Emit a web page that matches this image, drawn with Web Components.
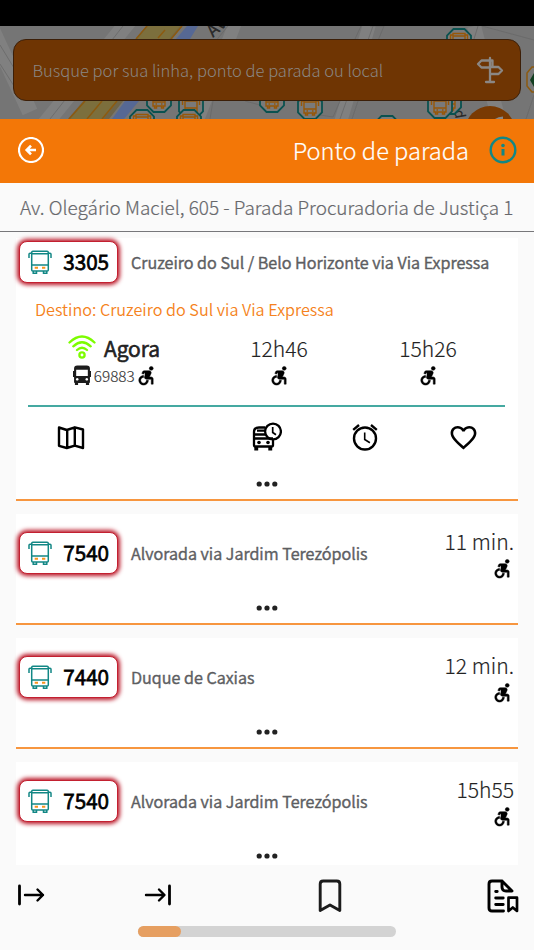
<!DOCTYPE html>
<html lang="pt-BR">
<head>
<meta charset="utf-8">
<title>Ponto de parada</title>
<style>
  html, body {
    margin: 0;
    height: 100%;
    overflow: hidden;
    background: #fafafa;
  }
  body {
    font-family: "Noto Sans CJK SC", "Noto Sans", sans-serif;
    font-weight: 300;
    color: #222;
  }
</style>
</head>
<body>
<stop-app></stop-app>
<script>
const icons = {
  sign: ['0 0 28 28', '<g fill="none" stroke="currentColor" stroke-width="2.300" stroke-linejoin="round" stroke-linecap="round"><path d="M14 2v24M10 26h8M14 4.500H5.500L2 8l3.500 3.500H14M14 11h8.500l3.500 3.500-3.500 3.500H14M14 4.500h2.500v6"/></g>'],
  back: ['0 0 26 26', '<circle cx="13" cy="13" r="12" fill="none" stroke="currentColor" stroke-width="2.200"/><path d="M18 13H9M13 8.700 8.700 13l4.300 4.300" fill="none" stroke="currentColor" stroke-width="2.600"/>'],
  info: ['0 0 28 28', '<circle cx="14" cy="14" r="12.300" fill="none" stroke="currentColor" stroke-width="2.400"/><circle cx="14" cy="9.500" r="1.800" fill="currentColor"/><path d="M14 13v6.500" stroke="currentColor" stroke-width="3"/>'],
  vehicle: ['0 0 24 24', '<g fill="none" stroke="#128785" stroke-width="1.500"><path d="M1 8V4.200q0-1 1-1h2M23 8V4.200q0-1-1-1h-2"/><path d="M3.700 20V2.500q0-1.200 1.200-1.200h14.200q1.200 0 1.200 1.200V20q0 1-1 1H4.700q-1 0-1-1zM3.700 3.800h16.600M3.700 15h16.600M5.200 21v2.300h3.300V21M15.500 21v2.300h3.300V21"/></g><path d="M6.700 17.700H10M14 17.700h3.300" stroke="#f7941d" stroke-width="1.900"/>'],
  wifi: ['0 0 28 24', '<g fill="none" stroke="currentColor" stroke-width="2.300" stroke-linecap="round"><path d="M1.500 7.500q12.500-12 25 0M5.300 11.300q8.700-8 17.400 0M9 15q5-4.500 10 0"/><circle cx="14" cy="20" r="2.600"/></g>'],
  bus: ['0 0 17 20', '<path fill="#1c1c1c" fill-rule="evenodd" d="M4 .5h9q3 0 3 3V6h1v6h-1v5.200q0 .8-.8.800V20h-3v-2H4.800v2h-3v-2q-.8 0-.8-.8V12H0V6h1V3.500q0-3 3-3zM3 4.800V11h11V4.800zM4 13a1.300 1.300 0 1 0 .01 0zM13 13a1.300 1.300 0 1 0 .01 0z"/>'],
  chair: ['0 0 24 24', '<g fill="currentColor" stroke="currentColor" stroke-width=".5"><circle cx="18" cy="4.540" r="2"/><path d="M15 17h-2c0 1.650-1.350 3-3 3s-3-1.350-3-3 1.350-3 3-3v-2c-2.760 0-5 2.240-5 5s2.240 5 5 5 5-2.240 5-5zm3-3.500h-1.860l1.670-3.670C18.420 8.500 17.440 7 15.960 7h-5.200c-.81 0-1.540.47-1.870 1.200L8.220 10l1.920.53.650-1.530H13l-1.830 4.100c-.6 1.330.39 2.900 1.850 2.900H18v5h2v-5.500c0-1.100-.9-2-2-2z"/><path d="M11.500 8h5l-3 6.500-2 .3z"/></g>'],
  map: ['0 0 28 26', '<path d="M2 3.500 9.800 6l8-2.700L26 5.500V24l-8.200-2.300L9.800 24 2 21.800zM10.200 6v17.500M17.800 3.500v18" fill="none" stroke="currentColor" stroke-width="2.400" stroke-linejoin="round"/>'],
  schedule: ['0 0 30 30', '<g fill="none" stroke="currentColor" stroke-width="2.300"><path d="M13.300 5.500H7q-5 0-5 4.500v13.500q0 1 1 1h17q1 0 1-1V18M2 16.500h19M5 8.700h8.500M3 12.500h10.500"/><circle cx="21" cy="9.500" r="7.900"/><path d="M20.700 5v5.500l3.300 2.300" stroke-width="1.700"/></g><g fill="currentColor"><path d="M2.300 24h3.900v4.500H2.300zM16.300 24h3.900v4.500h-3.900z"/><circle cx="7" cy="20.500" r="1.800"/><circle cx="16" cy="20.500" r="1.800"/></g>'],
  alarm: ['0 0 26 28', '<g fill="none" stroke="currentColor" stroke-width="2.400"><circle cx="13" cy="15.500" r="11"/><path d="M1.200 6.800 7 2M24.800 6.800 19 2"/><path d="M12.700 9.500v7l5.200 3.200" stroke-width="1.600"/></g>'],
  heart: ['0 0 24 24', '<path fill="currentColor" d="M16.500 3c-1.740 0-3.410.81-4.500 2.090C10.910 3.810 9.240 3 7.500 3 4.420 3 2 5.420 2 8.500c0 3.780 3.400 6.860 8.550 11.540L12 21.350l1.450-1.320C18.600 15.360 22 12.280 22 8.500 22 5.420 19.580 3 16.500 3zm-4.400 15.550-.1.100-.1-.1C7.140 14.240 4 11.390 4 8.500 4 6.500 5.500 5 7.500 5c1.540 0 3.040.99 3.570 2.360h1.870C13.460 5.990 14.960 5 16.500 5c2 0 3.500 1.500 3.500 3.500 0 2.890-3.140 5.740-7.900 10.050z"/>'],
  dots: ['0 0 22 6', '<g fill="currentColor"><circle cx="3.200" cy="3" r="2.600"/><circle cx="11" cy="3" r="2.600"/><circle cx="18.800" cy="3" r="2.600"/></g>'],
  start: ['0 0 28 22', '<g fill="none" stroke="currentColor" stroke-linecap="round" stroke-linejoin="round"><path d="M2.500 2v18" stroke-width="2.800"/><path d="M8 11h18M20.500 5.500 26 11l-5.500 5.500" stroke-width="2.400"/></g>'],
  end: ['0 0 28 22', '<g fill="none" stroke="currentColor" stroke-linecap="round" stroke-linejoin="round"><path d="M25.500 2v18" stroke-width="2.800"/><path d="M2 11h18M15 5.500l5.500 5.500-5.500 5.500" stroke-width="2.400"/></g>'],
  bookmark: ['0 0 24 34', '<path d="M2.200 31.500V5q0-3 3-3h13.600q3 0 3 3v26.500L12 26z" fill="none" stroke="#1c1c1c" stroke-width="2.900" stroke-linejoin="round"/>'],
  document: ['0 0 32 34', '<g fill="none" stroke="currentColor" stroke-width="2.900" stroke-linecap="round" stroke-linejoin="round"><path d="M16.500 32H5q-3 0-3-3V5q0-3 3-3h10l10 10h-6q-4 0-4-4V2"/><path d="M8.700 12.500h1.500M8.700 19h7.500M8.700 25.500h7.500"/><path d="M21.500 18.700h8.500V32l-4.200-3.500-4.300 3.500z" stroke-width="2.700"/></g>'],
};

class AppIcon extends HTMLElement {
  constructor() {
    super();
    this.attachShadow({ mode: 'open' });
  }
  connectedCallback() {
    const [box, body] = icons[this.getAttribute('name')];
    const w = this.getAttribute('w');
    const h = this.getAttribute('h') || w;
    this.shadowRoot.innerHTML = `
      <style>
        :host{
          display: block;
          flex: none;
          width: ${w}px;
          height: ${h}px;
        }
        svg{
          display: block;
        }
      </style>
      <svg width="${w}" height="${h}" viewBox="${box}" preserveAspectRatio="none">${body}</svg>
    `;
  }
}
customElements.define('app-icon', AppIcon);

class MapBackdrop extends HTMLElement {
  constructor() {
    super();
    this.attachShadow({ mode: 'open' });
  }
  getStop(x, y) {
    return `
      <g transform="translate(${x} ${y})" fill="none">
        <path d="M-5.500-12h11L12-5.500v11L5.500 12h-11L-12 5.500v-11z" fill="#7a7a7a" stroke="#0a5250" stroke-width="1.800"/>
        <path d="M-6 6V-7.500H6V6zM-6-5H6M-6 2H6M-8.500-1v-5h2M8.500-1v-5h-2M-4.500 6v2h2V6M2.500 6v2h2V6M-3.500 4h1.500M2 4h1.500" stroke="#975708" stroke-width="1.400"/>
      </g>
    `;
  }
  connectedCallback() {
    const stops = [[159, 100], [191, 106], [142, 122], [189, 122], [459, 41], [272, 100], [449, 102], [440, 106], [310, 107], [387, 128]];
    this.shadowRoot.innerHTML = `
      <style>
        :host{
          display: block;
          grid-area: 1 / 1;
          height: 93px;
          overflow: hidden;
        }
        svg{
          display: block;
        }
      </style>
      <svg width="534" height="93" viewBox="0 26 534 93">
        <path fill="#757575" d="M0 26h534v93H0z"/>
        <g fill="none" stroke="#808080">
          <path d="M-8 30 30 112M133 16 45 124" stroke-width="16"/>
          <path d="M372 16 340 124M238 16 196 124" stroke-width="13"/>
          <path d="M474 26 500 124" stroke-width="14"/>
        </g>
        <g fill="none" stroke="#686868" stroke-width=".8">
          <path d="M0 64 14 86M0 45 14 68M123 26 50 119M228 26 200 60M361 26 355 39M370 26 375 26 384 26 370 60M373 26 340 119M478 26 474 39M482 26 534 40M213 101 210 119M245 101 260 105M320 115 333 117 340 101M358 101 352 119M534 95 526 119"/>
        </g>
        <path fill="#706548" d="M147 26h35L109 119H68z"/>
        <path fill="#7c6f3d" d="M148 26h32L103 119H70z"/>
        <path fill="none" stroke="#8c5a10" stroke-width="1.500" d="M147 26 136 39M85 101 69 119M182 26 171 39M165 30 158 38M102 101 87 119M117 101 102 119"/>
        <path fill="#566894" d="M187 26h11l-8 13h-14zM125 101h14l-15 18h-12z"/>
        <text x="213" y="38" transform="rotate(-42 213 38)" font-size="17" font-weight="500" fill="#2b2b2b">Av</text>
        <text x="451" y="94" transform="rotate(80 451 94)" font-size="14" font-weight="500" fill="#2b2b2b">and</text>
        ${stops.map(([x, y]) => this.getStop(x, y)).join('')}
        <circle cx="490" cy="131" r="25" fill="#793a03"/>
        <path d="M495 121q3-3 8-3" stroke="#888" stroke-width="3" fill="none"/>
        <path d="M535 67h-3l-5 6v13l5 6h3z" fill="#7a7a7a" stroke="#8c5a10" stroke-width="1.500"/>
        <path d="M534 73v14l-4-7z" fill="#123f20"/>
      </svg>
    `;
  }
}
customElements.define('map-backdrop', MapBackdrop);

class SearchBar extends HTMLElement {
  constructor() {
    super();
    this.attachShadow({ mode: 'open' });
  }
  connectedCallback() {
    this.shadowRoot.innerHTML = `
      <style>
        :host{
          display: flex;
          align-items: center;
          justify-content: space-between;
          grid-area: 1 / 1;
          box-sizing: border-box;
          height: 62px;
          margin: 13px 13px 0;
          padding: 0 16px 0 18.5px;
          background: #6f3503;
          border: 1px solid #3c1f08;
          border-radius: 13px;
          color: #8b8784;
          font-size: 16.55px;
          line-height: 26px;
        }
      </style>
      <span><slot></slot></span>
      <app-icon name="sign" w="28"></app-icon>
    `;
  }
}
customElements.define('search-bar', SearchBar);

class PanelHeader extends HTMLElement {
  constructor() {
    super();
    this.attachShadow({ mode: 'open' });
  }
  connectedCallback() {
    this.shadowRoot.innerHTML = `
      <style>
        :host{
          display: block;
        }
        header{
          display: flex;
          align-items: center;
          box-sizing: border-box;
          height: 64px;
          padding: 0 17px 3px 18px;
          background: #f37707;
          color: #fff;
        }
        h1{
          flex: 1;
          margin: 0 20px 0 0;
          text-align: right;
          font-size: 23.65px;
          font-weight: 300;
          line-height: 36px;
          -webkit-text-stroke: .2px;
        }
        .info{
          color: #128785;
        }
        p{
          box-sizing: border-box;
          height: 49px;
          margin: 0;
          padding: 0 20px;
          border-bottom: 1px solid #77777a;
          color: #67686c;
          font-size: 18.950px;
          line-height: 48px;
          white-space: nowrap;
          -webkit-text-stroke: .2px;
        }
      </style>
      <header>
        <app-icon name="back" w="26"></app-icon>
        <h1><slot name="title"></slot></h1>
        <app-icon class="info" name="info" w="28"></app-icon>
      </header>
      <p><slot></slot></p>
    `;
  }
}
customElements.define('panel-header', PanelHeader);

class LineBadge extends HTMLElement {
  constructor() {
    super();
    this.attachShadow({ mode: 'open' });
  }
  connectedCallback() {
    this.shadowRoot.innerHTML = `
      <style>
        :host{
          display: flex;
          flex: none;
          align-items: center;
          justify-content: space-between;
          box-sizing: border-box;
          width: 99px;
          height: 42px;
          padding: 0 8px 2px;
          background: #fff;
          border: 1px solid #c32030;
          border-radius: 8px;
          box-shadow: 0 0 4px 2px #b91526;
          color: #000;
          font-size: 20.800px;
          font-weight: 350;
          line-height: 30px;
          -webkit-text-stroke: .8px;
        }
        app-icon{
          margin-top: 2px;
        }
      </style>
      <app-icon name="vehicle" w="24"></app-icon>
      <slot></slot>
    `;
  }
}
customElements.define('line-badge', LineBadge);

class DepartureTime extends HTMLElement {
  constructor() {
    super();
    this.attachShadow({ mode: 'open' });
  }
  connectedCallback() {
    const live = this.hasAttribute('live');
    const vehicle = this.getAttribute('vehicle');
    this.shadowRoot.innerHTML = `
      <style>
        :host{
          display: flex;
          flex-direction: column;
          align-items: center;
          color: #222;
          white-space: nowrap;
          -webkit-text-stroke: .15px;
        }
        :host([live]){
          margin-right: 4px;
        }
        div{
          display: flex;
          align-items: center;
          height: 28px;
          padding-bottom: 2px;
          font-size: 21.100px;
          line-height: 28px;
        }
        .live{
          gap: 8px;
          font-weight: 350;
          -webkit-text-stroke: .7px;
        }
        .live app-icon{
          margin-top: -2px;
          color: #7cfc00;
        }
        .access{
          height: 22px;
          margin-right: 1px;
          font-size: 15.300px;
          line-height: 22px;
          color: #333;
        }
        :host([live]) .access{
          margin-right: -1.500px;
        }
        .access span{
          margin: 0 -1px 0 3px;
        }
        .access app-icon{
          color: #000;
        }
      </style>
      <div class="${live ? 'live' : ''}">
        ${live ? '<app-icon name="wifi" w="28" h="24"></app-icon>' : ''}
        <span><slot></slot></span>
      </div>
      <div class="access">
        ${vehicle ? `<app-icon name="bus" w="18" h="20"></app-icon><span>${vehicle}</span>` : ''}
        <app-icon name="chair" w="23"></app-icon>
      </div>
    `;
  }
}
customElements.define('departure-time', DepartureTime);

class LineCard extends HTMLElement {
  constructor() {
    super();
    this.attachShadow({ mode: 'open' });
  }
  getDetails() {
    return `
      <p class="destination"><slot name="destination"></slot></p>
      <div class="times"><slot name="times"></slot></div>
      <hr>
      <nav>
        <app-icon name="map" w="28" h="26"></app-icon>
        <span></span>
        <app-icon name="schedule" w="30"></app-icon>
        <app-icon name="alarm" w="26" h="28"></app-icon>
        <app-icon name="heart" w="31"></app-icon>
      </nav>
    `;
  }
  connectedCallback() {
    const open = this.hasAttribute('open');
    this.shadowRoot.innerHTML = `
      <style>
        :host{
          display: flex;
          flex-direction: column;
          box-sizing: border-box;
          height: 111px;
          margin-bottom: 13px;
          padding-top: 18px;
          background: #fff;
          border-bottom: 2px solid #f7963f;
        }
        :host([open]){
          height: 263px;
          padding-top: 3px;
        }
        :host([last]){
          height: 103px;
          margin: 0;
          border: 0;
        }
        .row{
          display: flex;
          height: 41px;
          padding-left: 3px;
        }
        h2{
          flex: 1;
          margin: 1px 0 0 13px;
          color: #5c5d61;
          font-size: 16.200px;
          font-weight: 350;
          line-height: 41px;
          white-space: nowrap;
          -webkit-text-stroke: .45px;
        }
        .soon{
          display: block;
          margin: -5px 4px 0 0;
        }
        ::slotted([slot="soon"]){
          align-items: flex-end !important;
        }
        .destination{
          margin: 15px 0 0 19px;
          color: #f58220;
          font-size: 16.200px;
          font-weight: 350;
          line-height: 24px;
        }
        .times{
          display: grid;
          grid-template-columns: 162px 164px 134px;
          padding: 13px 0 0 19px;
        }
        hr{
          width: 477px;
          height: 2px;
          margin: 17px 0 0 12.400px;
          border: 0;
          background: #45a9a1;
        }
        nav{
          display: grid;
          grid-template-columns: repeat(5, 98px);
          place-items: center;
          height: 60px;
          margin-left: 6px;
          color: #000;
        }
        .more{
          margin: auto auto 12px;
        }
        :host([last]) .more{
          margin-bottom: 6px;
        }
      </style>
      <div class="row">
        <line-badge>${this.getAttribute('number')}</line-badge>
        <h2><slot></slot></h2>
        <div class="soon"><slot name="soon"></slot></div>
      </div>
      ${open ? this.getDetails() : ''}
      <app-icon class="more" name="dots" w="22" h="6"></app-icon>
    `;
  }
}
customElements.define('line-card', LineCard);

class BottomBar extends HTMLElement {
  constructor() {
    super();
    this.attachShadow({ mode: 'open' });
  }
  connectedCallback() {
    this.shadowRoot.innerHTML = `
      <style>
        :host{
          display: block;
          height: 85px;
          color: #000;
        }
        nav{
          display: flex;
          align-items: center;
          height: 60px;
          padding: 0 15px 0 17px;
        }
        .end{
          margin-left: 99px;
        }
        .saved{
          margin: 2px 0 0 146px;
        }
        .document{
          margin: 2px 0 0 auto;
        }
        .track{
          width: 258px;
          height: 11px;
          margin: 1px 0 0 138px;
          border-radius: 6px;
          background: #d3d3d3;
        }
        .value{
          width: 43px;
          height: 11px;
          border-radius: 6px;
          background: #e69f61;
        }
      </style>
      <nav>
        <app-icon name="start" w="28" h="22"></app-icon>
        <app-icon class="end" name="end" w="28" h="22"></app-icon>
        <app-icon class="saved" name="bookmark" w="24" h="34"></app-icon>
        <app-icon class="document" name="document" w="32" h="34"></app-icon>
      </nav>
      <div class="track"><div class="value"></div></div>
    `;
  }
}
customElements.define('bottom-bar', BottomBar);

class StopApp extends HTMLElement {
  constructor() {
    super();
    this.attachShadow({ mode: 'open' });
  }
  connectedCallback() {
    this.shadowRoot.innerHTML = `
      <style>
        :host{
          display: flex;
          flex-direction: column;
          width: 534px;
          height: 950px;
          background: #fafafa;
        }
        .status{
          height: 26px;
          background: #000;
        }
        .top{
          display: grid;
          align-items: start;
          height: 93px;
        }
        main{
          height: 627px;
          margin: 6px 16px 0;
        }
      </style>
      <div class="status"></div>
      <div class="top">
        <map-backdrop></map-backdrop>
        <search-bar>Busque por sua linha, ponto de parada ou local</search-bar>
      </div>
      <panel-header>
        <span slot="title">Ponto de parada</span>
        Av. Olegário Maciel, 605 - Parada Procuradoria de Justiça 1
      </panel-header>
      <main>
        <line-card number="3305" open>
          Cruzeiro do Sul / Belo Horizonte via Via Expressa
          <span slot="destination">Destino: Cruzeiro do Sul via Via Expressa</span>
          <departure-time slot="times" vehicle="69883" live>Agora</departure-time>
          <departure-time slot="times">12h46</departure-time>
          <departure-time slot="times">15h26</departure-time>
        </line-card>
        <line-card number="7540">
          Alvorada via Jardim Terezópolis
          <departure-time slot="soon">11 min.</departure-time>
        </line-card>
        <line-card number="7440">
          Duque de Caxias
          <departure-time slot="soon">12 min.</departure-time>
        </line-card>
        <line-card number="7540" last>
          Alvorada via Jardim Terezópolis
          <departure-time slot="soon">15h55</departure-time>
        </line-card>
      </main>
      <bottom-bar></bottom-bar>
    `;
  }
}
customElements.define('stop-app', StopApp);
</script>
</body>
</html>
